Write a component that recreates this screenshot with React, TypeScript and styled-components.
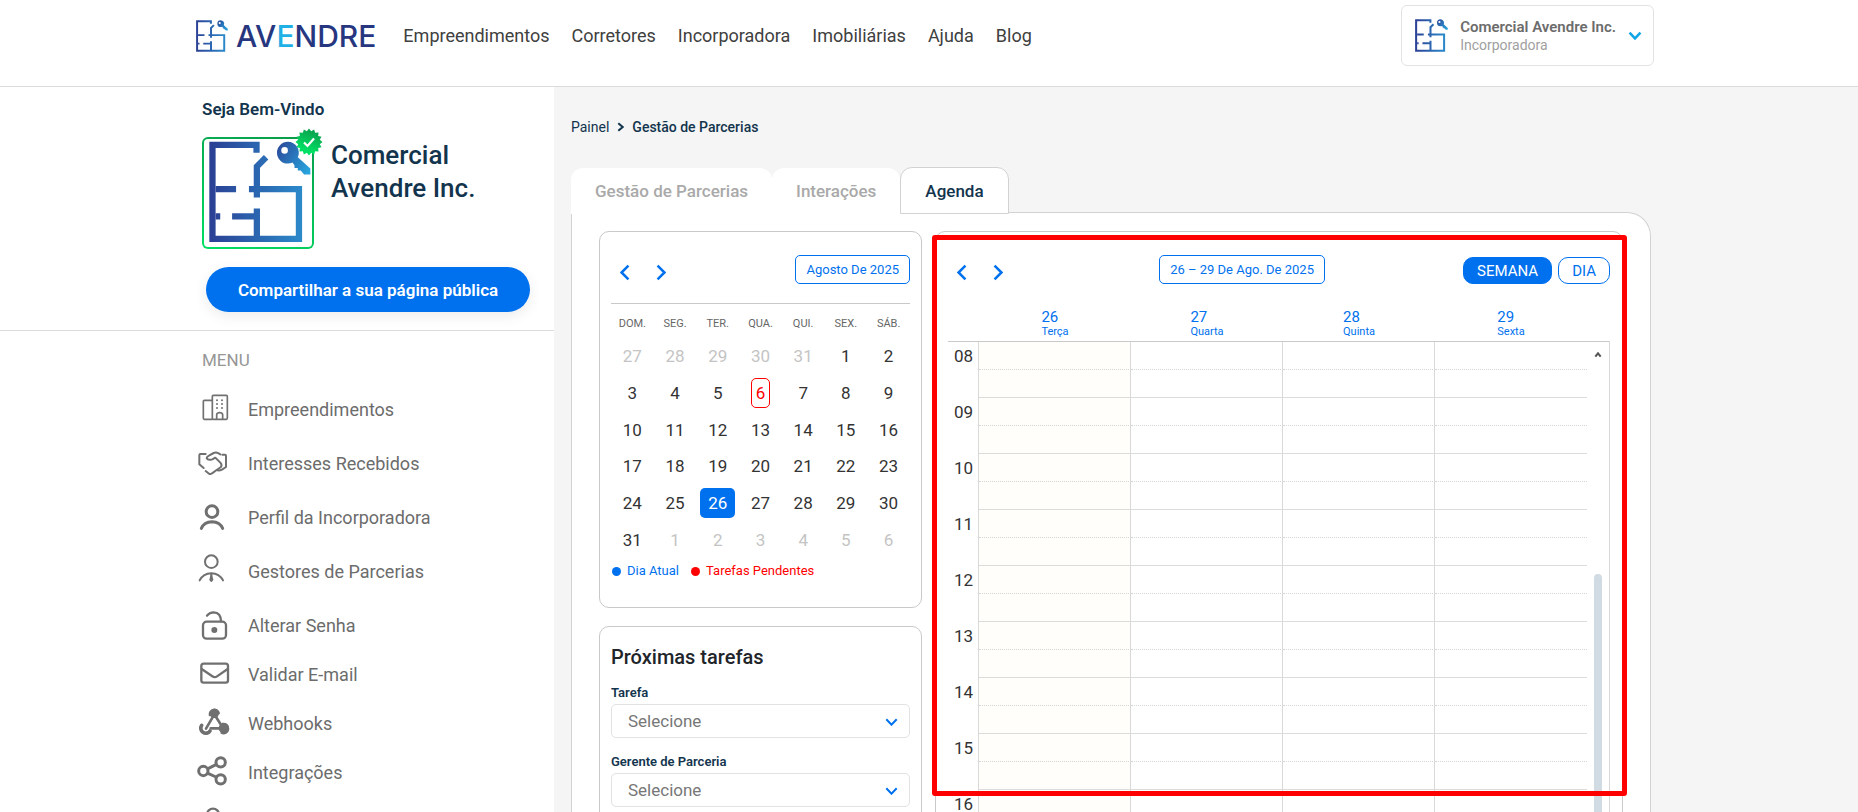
import React, { useId, useState } from "react";
import styled, { createGlobalStyle, css } from "styled-components";

const blue = "#0071ee";
const navy = "#12344d";
const red = "#ff0000";
const line = "#c9c9c9";

const GlobalStyle = createGlobalStyle`
  *, *::before, *::after { box-sizing: border-box; }
  :root { --gutter: max(8px, calc((100vw - 1480px) / 2)); }
  body {
    margin: 0;
    background: #fff;
    font-family: Roboto, "Liberation Sans", sans-serif;
    font-size: 17px;
    color: #333;
  }
  button, select { font-family: inherit; cursor: pointer; }
  button { padding: 0; border: 0; background: none; }
  a { color: inherit; text-decoration: none; }
  svg { display: block; }
`;

const Page = styled.div`
  display: flex;
  flex-direction: column;
  height: 100vh;
  overflow: hidden;
`;

/* Header */

const Header = styled.header`
  flex: none;
  border-bottom: 1px solid #dcdcdc;
  padding: 0 calc(var(--gutter) + 15px) 0 calc(var(--gutter) + 7px);
  height: 87px;
  display: flex;
  align-items: flex-start;
`;

const Brand = styled.a`
  display: flex;
  align-items: center;
  gap: 8px;
  height: 72px;
`;

const Wordmark = styled.span`
  font-family: Inter, "Liberation Sans", sans-serif;
  font-size: 30px;
  font-weight: 500;
  color: #26367f;
  em { font-style: normal; color: #1fb0e6; }
`;

const MainNav = styled.nav`
  display: flex;
  align-items: center;
  gap: 22px;
  height: 71px;
  margin-left: 27px;
  font-size: 18px;
  color: #404040;
`;

const Account = styled.button`
  display: flex;
  align-items: center;
  gap: 12px;
  height: 61px;
  margin: 5px 0 0 auto;
  padding: 0 11px 0 13px;
  border: 1px solid #e2e2e2;
  border-radius: 6px;
  text-align: left;
`;

const AccountText = styled.span`
  display: flex;
  flex-direction: column;
  font-size: 14px;
  line-height: 18px;
  color: #a0a0a0;
  strong { font-size: 15px; font-weight: 600; color: #6c6c6c; }
`;

/* Body */

const Body = styled.div`
  flex: 1;
  min-height: 0;
  display: flex;
`;

const Sidebar = styled.aside`
  flex: none;
  width: calc(var(--gutter) + 365px);
  background: #fff;
`;

const Welcome = styled.section`
  padding: 10px 24px 18px calc(var(--gutter) + 13px);
  border-bottom: 1px solid #dcdcdc;
`;

const Greeting = styled.p`
  margin: 0 0 16px;
  font-size: 17px;
  font-weight: 600;
  line-height: 24px;
  color: ${navy};
`;

const Profile = styled.div`
  display: flex;
  gap: 17px;
`;

const Avatar = styled.div`
  position: relative;
  flex: none;
  width: 112px;
  height: 112px;
  padding: 2px 1px 4px 5px;
  border: 2px solid transparent;
  border-radius: 6px;
  background: linear-gradient(#fff, #fff) padding-box,
    linear-gradient(20deg, #00e064, #0a9a4a) border-box;
`;

const Verified = styled.span`
  position: absolute;
  top: -11px;
  right: -11px;
`;

const ProfileName = styled.h1`
  margin: 2px 0 0;
  font-size: 26px;
  font-weight: 500;
  line-height: 33px;
  color: ${navy};
`;

const ShareButton = styled.button`
  display: block;
  width: calc(100% - 4px);
  height: 45px;
  margin: 18px 0 0 4px;
  border-radius: 23px;
  background: ${blue};
  color: #fff;
  font-size: 17px;
  font-weight: 600;
  box-shadow: 0 4px 14px rgba(0, 0, 0, 0.08);
`;

const Menu = styled.nav`
  padding: 17px 0 0 calc(var(--gutter) + 8px);
`;

const MenuTitle = styled.h2`
  margin: 0 0 19px 5px;
  font-size: 17px;
  font-weight: 400;
  line-height: 24px;
  color: #969696;
`;

const MenuList = styled.ul<{ $gap: number }>`
  list-style: none;
  margin: 0 0 13px;
  padding: 0;
  display: flex;
  flex-direction: column;
  gap: ${(p) => p.$gap}px;
`;

const MenuLink = styled.a`
  display: flex;
  align-items: center;
  gap: 15px;
  height: 36px;
  font-size: 18px;
  color: #6c6c6c;
`;

const Main = styled.main`
  flex: 1;
  min-width: 0;
  display: flex;
  flex-direction: column;
  padding: 30px calc(var(--gutter) + 18px) 0 17px;
  background: #f5f5f5;
`;

const Breadcrumb = styled.nav`
  display: flex;
  align-items: center;
  gap: 8px;
  margin-bottom: 30px;
  font-size: 14px;
  line-height: 20px;
  color: ${navy};
  strong { font-weight: 500; }
`;

const Tabs = styled.div`
  position: relative;
  z-index: 1;
  display: flex;
  align-items: flex-end;
  height: 47px;
  margin-bottom: -2px;
`;

const Tab = styled.button<{ $active?: boolean }>`
  height: 46px;
  padding: 0 24px;
  border-radius: 12px 12px 0 0;
  background: #fff;
  color: #a9a9a9;
  font-size: 17px;
  font-weight: 500;
  ${(p) =>
    p.$active &&
    css`
      height: 47px;
      border: 1px solid #d2d2d2;
      color: ${navy};
    `}
`;

const Panel = styled.div`
  flex: 1;
  min-height: 0;
  display: grid;
  grid-template-columns: 323px minmax(0, 1fr);
  gap: 13px;
  padding: 18px 27px 0;
  border: 1px solid #d2d2d2;
  border-bottom: 0;
  border-radius: 0 24px 0 0;
  background: #fff;
`;

const SideColumn = styled.div`
  display: flex;
  flex-direction: column;
  gap: 18px;
`;

const Card = styled.section`
  padding: 23px 11px 26px;
  border: 1px solid ${line};
  border-radius: 10px;
  background: #fff;
`;

const Toolbar = styled.div`
  display: flex;
  justify-content: space-between;
  height: 34px;
`;

const Stepper = styled.div`
  display: flex;
  gap: 8px;
  margin-right: 9px;
`;

const StepButton = styled.button`
  display: grid;
  place-items: center;
  width: 28px;
  height: 34px;
`;

const RangeButton = styled.button`
  height: 29px;
  padding: 0 10px;
  border: 1px solid ${blue};
  border-radius: 5px;
  color: ${blue};
  font-size: 13px;
`;

const MonthTable = styled.table`
  width: 100%;
  margin-top: 14px;
  border-top: 1px solid ${line};
  border-spacing: 0;
  table-layout: fixed;
  th {
    height: 34px;
    padding: 4px 0 0;
    font-size: 11px;
    font-weight: 400;
    color: #666;
  }
  td {
    height: 36px;
    padding: 0;
    text-align: center;
  }
  tr.tall td { height: 38px; }
`;

const Day = styled.button<{ $kind?: string }>`
  height: 30px;
  padding: 0 4px;
  font-size: 17px;
  color: ${(p) => (p.$kind === "out" ? "#c4c4c4" : "#333")};
  ${(p) =>
    p.$kind === "pending" &&
    css`
      border: 1px solid ${red};
      border-radius: 5px;
      color: ${red};
    `}
  ${(p) =>
    p.$kind === "today" &&
    css`
      width: 35px;
      border-radius: 5px;
      background: ${blue};
      color: #fff;
    `}
`;

const Legend = styled.div`
  display: flex;
  gap: 12px;
  margin: 3px 0 0 1px;
  font-size: 13px;
  line-height: 20px;
`;

const LegendItem = styled.span<{ $color: string }>`
  display: flex;
  align-items: center;
  gap: 6px;
  color: ${(p) => p.$color};
  &::before {
    content: "";
    width: 9px;
    height: 9px;
    border-radius: 50%;
    background: ${(p) => p.$color};
  }
`;

const TasksCard = styled(Card)`
  flex: none;
  padding-top: 16px;
`;

const CardTitle = styled.h2`
  margin: 0 0 12px;
  font-size: 20px;
  font-weight: 500;
  line-height: 28px;
  color: #212529;
`;

const Field = styled.div`
  margin-bottom: 14px;
  label {
    display: block;
    margin-bottom: 1px;
    font-size: 13px;
    font-weight: 600;
    line-height: 20px;
    color: ${navy};
  }
`;

const SelectBox = styled.div`
  position: relative;
  select {
    display: block;
    width: 100%;
    height: 34px;
    padding: 0 16px;
    appearance: none;
    border: 1px solid #e2e2e2;
    border-radius: 5px;
    background: #fff;
    color: #777;
    font-size: 17px;
  }
  svg {
    position: absolute;
    top: 14px;
    right: 12px;
    pointer-events: none;
  }
`;

const WeekCard = styled(Card)`
  position: relative;
  padding-left: 12px;
  padding-right: 12px;
`;

const Highlight = styled.div`
  position: absolute;
  top: 3px;
  left: -4px;
  right: -5px;
  height: 561px;
  border: 5px solid ${red};
  border-radius: 3px;
  pointer-events: none;
`;

const Views = styled.div`
  display: flex;
  gap: 6px;
  margin-top: 2px;
`;

const ViewButton = styled.button<{ $active?: boolean }>`
  height: 27px;
  padding: 0 13px;
  border: 1px solid ${blue};
  border-radius: 10px;
  background: ${(p) => (p.$active ? blue : "#fff")};
  color: ${(p) => (p.$active ? "#fff" : blue)};
  font-size: 15px;
`;

const WeekBody = styled.div`
  display: flex;
  margin-top: 20px;
`;

const WeekTable = styled.table`
  flex: 1;
  width: 100%;
  border-spacing: 0;
  table-layout: fixed;
  col.axis { width: 31px; }
  th, td { padding: 0; font-weight: 400; }
  thead th {
    height: 33px;
    border-bottom: 1px solid ${line};
    vertical-align: top;
  }
  tbody th {
    vertical-align: top;
    border-right: 1px solid #d9d9d9;
    padding: 6px 5px 0 0;
    text-align: right;
    font-size: 17px;
    line-height: 16px;
  }
  tbody td {
    height: 28px;
    border-bottom: 1px dotted #d6d6d6;
    border-right: 1px solid #d9d9d9;
  }
  tbody tr:nth-child(even) td { border-bottom: 1px solid #dcdcdc; }
  tbody td:last-child { border-right: 0; }
  td.today { background: #fffefa; }
`;

const DayHead = styled.span`
  display: inline-block;
  text-align: left;
  font-size: 11px;
  line-height: 14px;
  color: ${blue};
  b { display: block; font-size: 15px; font-weight: 400; line-height: 16px; }
`;

const ScrollRail = styled.div`
  flex: none;
  display: flex;
  flex-direction: column;
  align-items: center;
  justify-content: space-between;
  width: 23px;
  margin-top: 32px;
  padding-top: 10px;
  border-top: 1px solid ${line};
  border-right: 1px solid #d9d9d9;
`;

const Thumb = styled.div`
  width: 8px;
  height: 55%;
  border-radius: 4px 4px 0 0;
  background: #d0dbe3;
`;

/* Drawings */

function PlanLogo({ width, height }: { width: number | string; height: number | string }) {
  const id = useId();
  const paint = `url(#${id}plan)`;
  return (
    <svg width={width} height={height} viewBox="86 153 309 308" aria-hidden="true">
      <defs>
        <linearGradient id={`${id}plan`} gradientUnits="userSpaceOnUse" x1="87" y1="0" x2="368" y2="0">
          <stop offset="0" stopColor="#2b3f94" />
          <stop offset="1" stopColor="#2b8aca" />
        </linearGradient>
        <linearGradient id={`${id}key`} gradientUnits="userSpaceOnUse" x1="291" y1="170" x2="393" y2="240">
          <stop offset="0" stopColor="#2b4a9b" />
          <stop offset="1" stopColor="#28a5de" />
        </linearGradient>
      </defs>
      <g fill="none" stroke={paint} strokeWidth="19">
        <path d="M230 188V164.500H96.500V449H358.500V298.500H207" />
        <path d="M106 298.500H168M106 380.500H120M156 380.500H231M231 449V357" />
        <path d="M231 324V230L259 202" />
      </g>
      <path
        fill={`url(#${id}key)`}
        fillRule="evenodd"
        d="M325 155a33 33 0 1 0 0 66q8 0 14-3l6 8v8h10v8h9l10 12h19v-18l-38-34a33 33 0 0 0-30-47ZM315 171a10 10 0 1 1 0 20a10 10 0 1 1 0-20Z"
      />
    </svg>
  );
}

function Seal() {
  const points = Array.from({ length: 32 }, (_, i) => {
    const r = i % 2 ? 11 : 13.5;
    const a = (i * Math.PI) / 16;
    return `${(14 + r * Math.sin(a)).toFixed(2)},${(14 - r * Math.cos(a)).toFixed(2)}`;
  }).join(" ");
  return (
    <svg width="28" height="28" viewBox="0 0 28 28" role="img" aria-label="Verificado">
      <defs>
        <linearGradient id="seal" x1="0.700" y1="0" x2="0.300" y2="1">
          <stop offset="0" stopColor="#0a9a4a" />
          <stop offset="0.800" stopColor="#00e064" />
        </linearGradient>
      </defs>
      <polygon points={points} fill="url(#seal)" />
      <path d="M9 14.500l3.500 3.500l6.500-7.500" fill="none" stroke="#fff" strokeWidth="2.200" />
    </svg>
  );
}

type Direction = "left" | "right" | "down" | "up";

function Chevron({ dir, w, h, color, weight = 2 }: { dir: Direction; w: number; h: number; color: string; weight?: number }) {
  const m = weight / 2 + 0.3;
  const d = {
    left: `M${w - m} ${m}L${m} ${h / 2}L${w - m} ${h - m}`,
    right: `M${m} ${m}L${w - m} ${h / 2}L${m} ${h - m}`,
    down: `M${m} ${m}L${w / 2} ${h - m}L${w - m} ${m}`,
    up: `M${m} ${h - m}L${w / 2} ${m}L${w - m} ${h - m}`,
  }[dir];
  return (
    <svg width={w} height={h} viewBox={`0 0 ${w} ${h}`} aria-hidden="true">
      <path d={d} fill="none" stroke={color} strokeWidth={weight} />
    </svg>
  );
}

function MenuIcon({ box, children }: { box: string; children: React.ReactNode }) {
  return (
    <svg
      width="36"
      height="36"
      viewBox={box}
      fill="none"
      stroke="#707070"
      strokeWidth="6"
      strokeLinecap="round"
      strokeLinejoin="round"
      aria-hidden="true"
    >
      {children}
    </svg>
  );
}

const primaryMenu = [
  {
    label: "Empreendimentos",
    icon: (
      <MenuIcon box="51 34 108 108">
        <g strokeWidth="5">
          <path d="M96 62H73Q70 62 70 65V116Q70 119 73 119H97" />
          <rect x="97" y="47" width="45" height="72" rx="3" />
          <path d="M110 118V105Q111 99 119 99Q127 99 128 105V118" />
        </g>
        <path d="M111 62h0M126 62h0M111 73h0M126 73h0M111 85h0M126 85h0" />
      </MenuIcon>
    ),
  },
  {
    label: "Interesses Recebidos",
    icon: (
      <MenuIcon box="51 196 108 108">
        <path d="M77 223H61Q58 223 58 227V254L71 265" />
        <path d="M77 274L87 282Q91 285 96 281L110 271L123 262Q127 255 121 249L106 234L97 239Q84 243 80 236Q80 231 88 227L101 220Q108 217 116 221L121 224" />
        <path d="M127 225H135Q138 225 138 229V262L126 270Q116 275 110 271" />
      </MenuIcon>
    ),
  },
  {
    label: "Perfil da Incorporadora",
    icon: (
      <MenuIcon box="51 358 108 108">
        <circle cx="96" cy="396" r="17.500" strokeWidth="9" />
        <path d="M64 446Q72 427 96 426Q120 427 128 446" strokeWidth="9" />
      </MenuIcon>
    ),
  },
  {
    label: "Gestores de Parcerias",
    icon: (
      <MenuIcon box="51 520 108 108">
        <circle cx="94" cy="546" r="19" />
        <path d="M59 602Q70 582 94 581Q118 582 129 602" />
        <path d="M94 582V590" />
        <path d="M94 589L97 600L94 604L91 600Z" fill="#707070" />
      </MenuIcon>
    ),
  },
  {
    label: "Alterar Senha",
    icon: (
      <MenuIcon box="51 52 108 108">
        <g strokeWidth="7">
          <rect x="69" y="96" width="69" height="51" rx="11" />
          <path d="M81 78Q88 68 101 68Q123 69 123 95" />
        </g>
        <circle cx="103" cy="121" r="6" fill="#707070" />
      </MenuIcon>
    ),
  },
];

const secondaryMenu = [
  {
    label: "Validar E-mail",
    icon: (
      <MenuIcon box="51 199 108 108">
        <g strokeWidth="7">
          <rect x="64" y="222" width="80" height="57" rx="7" />
          <path d="M65 238L97 260Q104 265 111 260L143 238" strokeLinecap="butt" />
        </g>
      </MenuIcon>
    ),
  },
  {
    label: "Webhooks",
    icon: (
      <MenuIcon box="51 346 108 108">
        <path d="M103 374L78 417M103 374L127 412M92 416H130" strokeWidth="8" />
        <path d="M89 377A14 14 0 1 1 117 371Z" fill="#707070" />
        <circle cx="103" cy="371" r="11" fill="#707070" />
        <path d="M65 407A13 13 0 1 0 90 424" strokeWidth="11" />
        <path d="M127 402A15 15 0 1 1 124 430Z" strokeWidth="5" fill="#707070" />
        <circle cx="131" cy="416" r="12" fill="#707070" />
      </MenuIcon>
    ),
  },
  {
    label: "Integrações",
    icon: (
      <MenuIcon box="51 493 108 108">
        <g strokeWidth="9">
          <circle cx="122" cy="518" r="14" />
          <circle cx="70" cy="544" r="14" />
          <circle cx="122" cy="569" r="14" />
          <path d="M84 537L108 525M84 551L108 562" />
        </g>
      </MenuIcon>
    ),
  },
];

const navLinks = ["Empreendimentos", "Corretores", "Incorporadora", "Imobiliárias", "Ajuda", "Blog"];
const weekdays = ["DOM.", "SEG.", "TER.", "QUA.", "QUI.", "SEX.", "SÁB."];
const monthWeeks = Array.from({ length: 6 }, (_, w) =>
  Array.from({ length: 7 }, (_, d) => {
    const n = w * 7 + d - 4;
    if (n < 1) return { n: n + 31, kind: "out" };
    if (n > 31) return { n: n - 31, kind: "out" };
    return { n, kind: n === 6 ? "pending" : n === 26 ? "today" : undefined };
  })
);
const weekDays = [
  { n: 26, name: "Terça" },
  { n: 27, name: "Quarta" },
  { n: 28, name: "Quinta" },
  { n: 29, name: "Sexta" },
];
const hours = ["08", "09", "10", "11", "12", "13", "14", "15", "16"];
const tabs = ["Gestão de Parcerias", "Interações", "Agenda"];

function Steps() {
  return (
    <Stepper>
      <StepButton aria-label="Anterior"><Chevron dir="left" w={10} h={17} color={blue} weight={2.5} /></StepButton>
      <StepButton aria-label="Próximo"><Chevron dir="right" w={10} h={17} color={blue} weight={2.5} /></StepButton>
    </Stepper>
  );
}

function SelectField({ id, label }: { id: string; label: string }) {
  return (
    <Field>
      <label htmlFor={id}>{label}</label>
      <SelectBox>
        <select id={id}><option>Selecione</option></select>
        <Chevron dir="down" w={13} h={8} color={blue} />
      </SelectBox>
    </Field>
  );
}

function Slot() {
  return (
    <>
      {weekDays.map((d) => (
        <td key={d.n} className={d.n === 26 ? "today" : undefined} />
      ))}
    </>
  );
}

export default function App() {
  const [tab, setTab] = useState("Agenda");
  const [view, setView] = useState("SEMANA");

  return (
    <Page>
      <GlobalStyle />
      <Header>
        <Brand href="#">
          <PlanLogo width={32} height={32} />
          <Wordmark>AV<em>E</em>NDRE</Wordmark>
        </Brand>
        <MainNav>
          {navLinks.map((l) => <a key={l} href="#">{l}</a>)}
        </MainNav>
        <Account>
          <PlanLogo width={33} height={33} />
          <AccountText>
            <strong>Comercial Avendre Inc.</strong>
            Incorporadora
          </AccountText>
          <Chevron dir="down" w={14} h={9} color="#12a5e6" weight={2.5} />
        </Account>
      </Header>

      <Body>
        <Sidebar>
          <Welcome>
            <Greeting>Seja Bem-Vindo</Greeting>
            <Profile>
              <Avatar>
                <PlanLogo width="100%" height="100%" />
                <Verified><Seal /></Verified>
              </Avatar>
              <ProfileName>Comercial<br />Avendre Inc.</ProfileName>
            </Profile>
            <ShareButton>Compartilhar a sua página pública</ShareButton>
          </Welcome>
          <Menu>
            <MenuTitle>MENU</MenuTitle>
            <MenuList $gap={18}>
              {primaryMenu.map((m) => (
                <li key={m.label}><MenuLink href="#">{m.icon}{m.label}</MenuLink></li>
              ))}
            </MenuList>
            <MenuList $gap={13}>
              {secondaryMenu.map((m) => (
                <li key={m.label}><MenuLink href="#">{m.icon}{m.label}</MenuLink></li>
              ))}
              <li>
                <MenuLink href="#" aria-label="Conta">
                  <MenuIcon box="51 640 108 108">
                    <circle cx="99" cy="675" r="18" strokeWidth="7" />
                  </MenuIcon>
                </MenuLink>
              </li>
            </MenuList>
          </Menu>
        </Sidebar>

        <Main>
          <Breadcrumb>
            <a href="#">Painel</a>
            <Chevron dir="right" w={7} h={10} color={navy} />
            <strong>Gestão de Parcerias</strong>
          </Breadcrumb>
          <Tabs role="tablist">
            {tabs.map((t) => (
              <Tab key={t} role="tab" aria-selected={t === tab} $active={t === tab} onClick={() => setTab(t)}>{t}</Tab>
            ))}
          </Tabs>
          <Panel>
            <SideColumn>
              <Card>
                <Toolbar>
                  <Steps />
                  <RangeButton>Agosto De 2025</RangeButton>
                </Toolbar>
                <MonthTable>
                  <thead>
                    <tr>{weekdays.map((d) => <th key={d}>{d}</th>)}</tr>
                  </thead>
                  <tbody>
                    {monthWeeks.map((week, i) => (
                      <tr key={i} className={i === 1 || i === 4 ? "tall" : undefined}>
                        {week.map((d, j) => (
                          <td key={j}><Day $kind={d.kind}>{d.n}</Day></td>
                        ))}
                      </tr>
                    ))}
                  </tbody>
                </MonthTable>
                <Legend>
                  <LegendItem $color={blue}>Dia Atual</LegendItem>
                  <LegendItem $color={red}>Tarefas Pendentes</LegendItem>
                </Legend>
              </Card>
              <TasksCard>
                <CardTitle>Próximas tarefas</CardTitle>
                <SelectField id="tarefa" label="Tarefa" />
                <SelectField id="gerente" label="Gerente de Parceria" />
              </TasksCard>
            </SideColumn>

            <WeekCard>
              <Toolbar>
                <Steps />
                <RangeButton>26 – 29 De Ago. De 2025</RangeButton>
                <Views>
                  {["SEMANA", "DIA"].map((v) => (
                    <ViewButton key={v} $active={v === view} onClick={() => setView(v)}>{v}</ViewButton>
                  ))}
                </Views>
              </Toolbar>
              <WeekBody>
                <WeekTable>
                  <colgroup>
                    <col className="axis" />
                    <col /><col /><col /><col />
                  </colgroup>
                  <thead>
                    <tr>
                      <th aria-label="Hora" />
                      {weekDays.map((d) => (
                        <th key={d.n}><DayHead><b>{d.n}</b>{d.name}</DayHead></th>
                      ))}
                    </tr>
                  </thead>
                  <tbody>
                    {hours.map((h) => (
                      <React.Fragment key={h}>
                        <tr><th rowSpan={2}>{h}</th><Slot /></tr>
                        <tr><Slot /></tr>
                      </React.Fragment>
                    ))}
                  </tbody>
                </WeekTable>
                <ScrollRail>
                  <Chevron dir="up" w={8} h={6} color="#555" />
                  <Thumb />
                </ScrollRail>
              </WeekBody>
              <Highlight />
            </WeekCard>
          </Panel>
        </Main>
      </Body>
    </Page>
  );
}
